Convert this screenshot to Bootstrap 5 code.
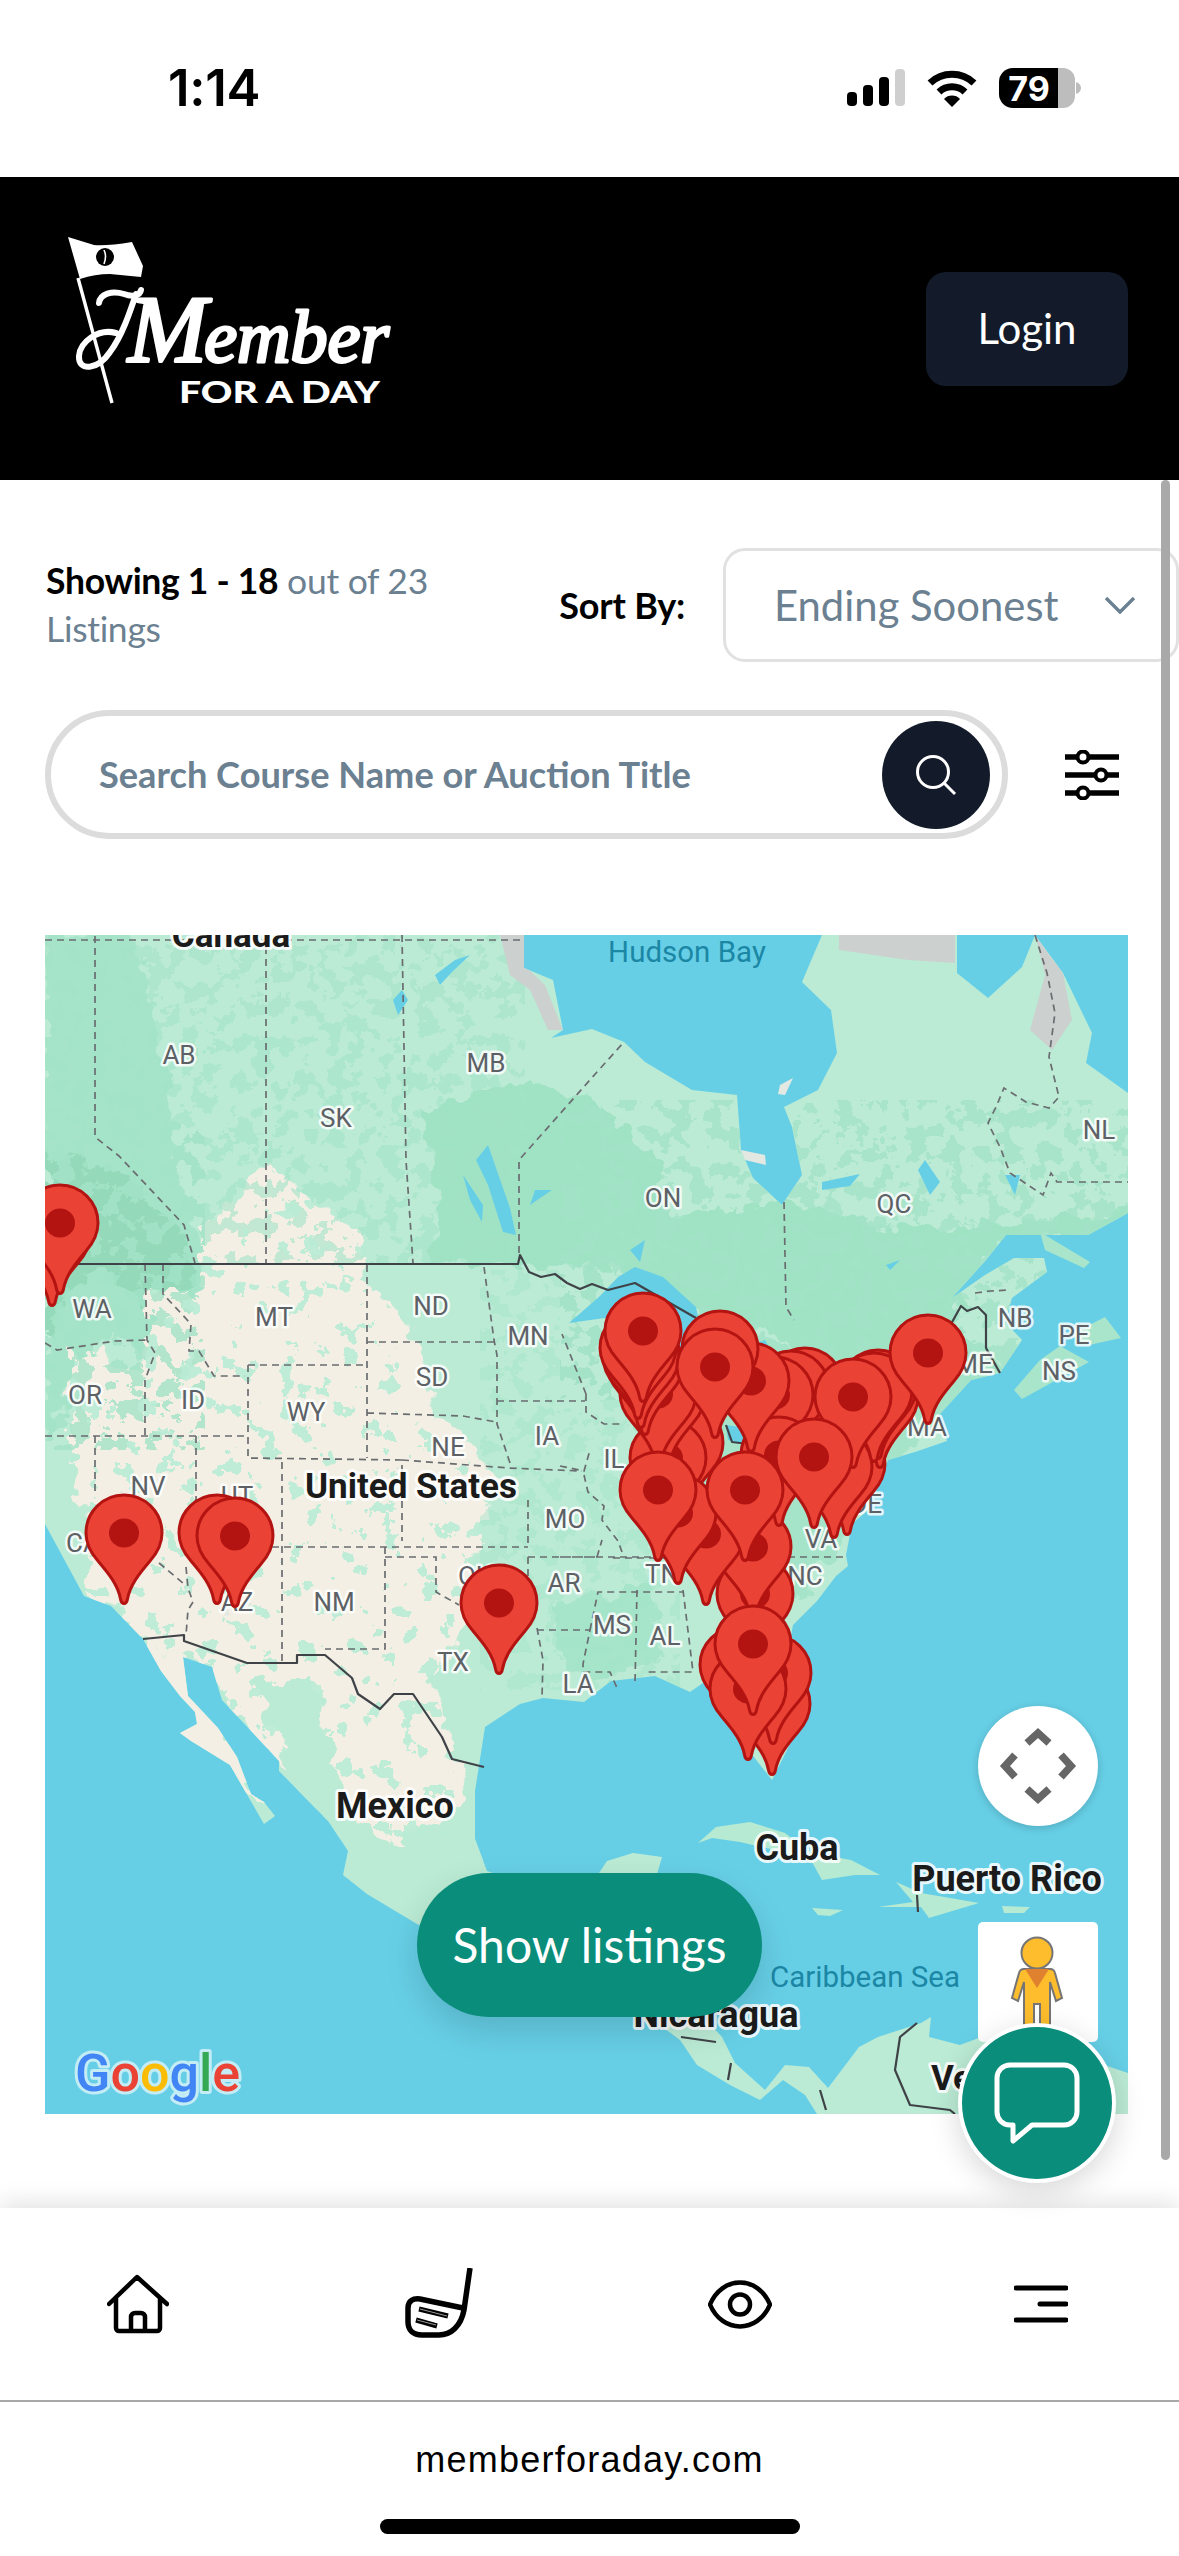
<!DOCTYPE html>
<html lang="en">
<head>
<meta charset="utf-8">
<title>Member For A Day</title>
<link href="https://cdn.jsdelivr.net/npm/bootstrap@5.3.0/dist/css/bootstrap.min.css" rel="stylesheet">
<style>
html,body{margin:0;width:1179px;height:2556px;overflow:hidden;background:#fff}
body{font-family:"Lato","Liberation Sans",sans-serif;color:#000}
.page-shell{width:1179px;height:2556px;position:relative;overflow:hidden}
.status-strip{height:177px;padding:0 98px 0 168px;background:#fff;flex:none}
.clock{font-family:"Inter","Liberation Sans",sans-serif;font-weight:600;font-size:51px;line-height:1;margin-top:-2px;letter-spacing:-.3px}
.status-icons{gap:22px;margin-top:-1px}
.brand-bar{height:303px;background:#000;padding:0 51px 0 68px;flex:none}
.brand-logo{width:330px;height:180px;margin-bottom:13px;display:block}
.login-btn{width:202px;height:114px;border:0;border-radius:20px;background:#131a29;color:#fff;font-size:42px;padding:0}
.login-btn:hover{background:#131a29;color:#fff}
.content-area{flex:1 1 auto;padding:68px 0 0 45px;position:relative;min-height:0}
.tool-row{height:114px}
.count-text{width:515px;font-size:35.5px;line-height:48px;color:#6b8090;padding-left:1px;letter-spacing:-.3px}
.count-text b{color:#000;font-weight:700}
.sort-label{width:164px;font-size:36px;font-weight:700;white-space:nowrap;letter-spacing:-.2px}
.sort-box{flex:0 0 456px;height:114px;border:3px solid #e1e1e1;border-radius:22px;padding:0 40px 0 48px;font-size:41.8px;color:#6b8090;background:#fff}
.search-row{margin-top:48px;height:129px}
.search-pill{width:963px;height:129px;border:6px solid #dcdcdc;border-radius:65px;padding:0 12px 0 48px;background:#fff}
.search-field{border:0;background:transparent;flex:1 1 auto;min-width:0;font-size:36.2px;font-weight:700;color:#6b8090;outline:0;font-family:"Lato",sans-serif;padding:0}
.search-field::placeholder{color:#6b8090;opacity:1}
.search-go{width:108px;height:108px;border-radius:50%;background:#131a29;flex:none;border:0;padding:0}
.filter-ico{margin-left:57px;display:block}
.map-wrap{position:relative;width:1083px;height:1179px;margin-top:96px;overflow:hidden}
.map-art{display:block;width:1083px;height:1179px}
.m-s{font:400 26px "Roboto",sans-serif;fill:#5d6166;stroke:#fff;stroke-width:5px;stroke-opacity:.82;paint-order:stroke;text-anchor:middle;stroke-linejoin:round}
.m-b{font:700 35px "Roboto",sans-serif;fill:#1b1b1b;stroke:#fff;stroke-width:6px;stroke-opacity:.85;paint-order:stroke;text-anchor:middle;stroke-linejoin:round}
.m-b2{font-size:36px}
.m-w{font:400 29.5px "Roboto",sans-serif;fill:#1b87a5;text-anchor:middle}
.m-g{font:500 52px "Roboto",sans-serif;stroke:#c3ecf5;stroke-width:6px;paint-order:stroke;stroke-linejoin:round}
.pan-ctl{position:absolute;left:933px;top:771px;width:120px;height:120px;border-radius:50%;background:#fff;box-shadow:0 2px 8px rgba(0,0,0,.18)}
.peg-ctl{position:absolute;left:933px;top:987px;width:120px;height:120px;border-radius:5px;background:#fff}
.show-btn{position:absolute;left:372px;top:938px;width:345px;height:144px;border-radius:72px;background:#0a8d7a;color:#fff;border:0;font-size:48px;padding:0;box-shadow:0 14px 34px rgba(0,0,0,.14)}
.show-btn:hover{background:#0a8d7a;color:#fff}
.chat-fab{position:absolute;left:958px;top:2023px;width:158px;height:160px;border-radius:50%;background:#0a8d7a;border:4px solid #fff;box-shadow:0 8px 30px rgba(0,0,0,.16);z-index:5;padding:0}
.bar-thumb{position:absolute;left:1161px;top:480px;width:9px;height:1680px;border-radius:5px;background:#a9a9a9;z-index:4}
.tab-bar{height:192px;background:#fff;padding:0 111px 0 107px;position:relative;z-index:3;box-shadow:0 -6px 22px rgba(0,0,0,.11);flex:none}
.eye-ico{margin-right:6px}
.addr-bar{height:156px;border-top:2px solid #a8a8a8;background:#fff;flex:none;position:relative;z-index:3}
.addr-text{font-family:"Liberation Sans",sans-serif;font-size:36px;line-height:1;text-align:center;padding-top:40px;letter-spacing:1.25px}
.home-pill{width:420px;height:15px;border-radius:8px;background:#000;margin:41px auto 0}
</style>
</head>
<body>
<div class="page-shell d-flex flex-column">

  <div class="status-strip d-flex justify-content-between align-items-center">
    <div class="clock">1:14</div>
    <div class="status-icons d-flex align-items-center">
      <svg width="58" height="38" viewBox="0 0 58 38"><rect x="0" y="23" width="10" height="14" rx="4"/><rect x="16" y="16" width="10" height="21" rx="4"/><rect x="32" y="8" width="10" height="29" rx="4"/><rect x="48" y="0" width="10" height="37" rx="4" fill="#cfcfcf"/></svg>
      <svg width="50" height="38" viewBox="0 0 50 38"><path d="M3 14A32 32 0 0 1 47 14M12 23A19 19 0 0 1 38 23" fill="none" stroke="#000" stroke-width="7"/><path d="M17 30A11 11 0 0 1 33 30L25 38Z"/></svg>
      <svg width="82" height="40" viewBox="0 0 82 40"><path d="M59 0H14A14 14 0 0 0 0 14V26A14 14 0 0 0 14 40H59Z"/><path d="M59 0H64A12 12 0 0 1 76 12V28A12 12 0 0 1 64 40H59Z" fill="#bdbdbd"/><path d="M77 14C80 15 82 17 82 20S80 25 77 26Z" fill="#bdbdbd"/><text x="30" y="33" text-anchor="middle" fill="#fff" font-family="Inter,sans-serif" font-weight="700" font-size="34">79</text></svg>
    </div>
  </div>

  <header class="brand-bar d-flex align-items-center justify-content-between">
    <svg class="brand-logo" viewBox="68 232 330 180" role="img" aria-label="Member For A Day">
      <path d="M68 237L94 245Q108 246 132 242L143 266L141 277L110 274Q95 274 80 279Z" fill="#fff"/>
      <circle cx="105" cy="257" r="9" fill="#000"/>
      <path d="M104 250Q107 256 104 264" stroke="#fff" stroke-width="1.6" fill="none"/>
      <path d="M78 278L112 403" stroke="#fff" stroke-width="3.4"/>
      <path d="M99 303C100 294 112 290 124 294C132 297 140 296 141 290" fill="none" stroke="#fff" stroke-width="6" stroke-linecap="round" stroke-linejoin="round"/>
      <path d="M116 333C98 328 80 342 79 356C78 372 98 370 110 352C122 336 130 312 136 294" fill="none" stroke="#fff" stroke-width="6" stroke-linecap="round"/>
      <text x="128" y="362" font-family="'Liberation Serif',serif" font-style="italic" fill="#fff" stroke="#fff" stroke-width="3" stroke-linejoin="round"><tspan font-size="95">M</tspan><tspan font-size="74" dx="-3">ember</tspan></text>
      <text x="179" y="403" textLength="201" lengthAdjust="spacingAndGlyphs" font-family="Lato,sans-serif" font-weight="900" font-size="30" fill="#fff">FOR A DAY</text>
    </svg>
    <button class="btn login-btn" type="button">Login</button>
  </header>

  <main class="content-area">
    <div class="tool-row d-flex align-items-center">
      <div class="count-text"><b>Showing 1 - 18</b> out of 23<br>Listings</div>
      <div class="sort-label">Sort By:</div>
      <div class="sort-box d-flex align-items-center justify-content-between">
        <span>Ending Soonest</span>
        <svg width="32" height="18" viewBox="0 0 32 18"><path d="M2 2L16 16L30 2" fill="none" stroke="#6b8090" stroke-width="3.4"/></svg>
      </div>
    </div>

    <div class="search-row d-flex align-items-center">
      <div class="search-pill d-flex align-items-center">
        <input class="search-field" type="text" placeholder="Search Course Name or Auction Title" aria-label="Search">
        <button class="search-go d-flex align-items-center justify-content-center" type="button" aria-label="Search">
          <svg width="42" height="42" viewBox="0 0 42 42"><circle cx="18" cy="18" r="15.5" fill="none" stroke="#fff" stroke-width="3"/><path d="M29 29L40 40" stroke="#fff" stroke-width="3"/></svg>
        </button>
      </div>
      <svg class="filter-ico" width="54" height="50" viewBox="0 0 54 50">
        <path d="M0 7H54M0 25H54M0 43H54" stroke="#000" stroke-width="5.5"/>
        <circle cx="18" cy="7" r="5.5" fill="#fff" stroke="#000" stroke-width="4"/>
        <circle cx="36" cy="25" r="5.5" fill="#fff" stroke="#000" stroke-width="4"/>
        <circle cx="18" cy="43" r="5.5" fill="#fff" stroke="#000" stroke-width="4"/>
      </svg>
    </div>

    <div class="map-wrap">
      <svg class="map-art" viewBox="45 935 1083 1179" xmlns="http://www.w3.org/2000/svg">
        <defs>
          <path id="landShape" d="M45 935H524V968L553 980L563 1030L551 1038L592 1029L624 1042L645 1062L692 1090L737 1095L741 1150L753 1178L782 1205L802 1175L792 1127L784 1107L818 1090L837 1053L831 1010L802 982L822 935H957V973L988 998L1022 967L1035 935L1063 973L1092 1033L1086 1063L1128 1093V1213L1088 1235H1006L986 1260L941 1310L952 1298L985 1275L1014 1258L1044 1258L1047 1272L1012 1298L1005 1322L1022 1340L1000 1373L971 1380L939 1415L947 1441L915 1452L888 1460L880 1481L868 1510L852 1524L846 1555L848 1566L836 1576L817 1601L793 1625L789 1646L809 1706L772 1780L750 1752L734 1730V1688L716 1674L690 1692L655 1676L611 1681L584 1702L543 1698L520 1704L485 1727L480 1759L475 1791V1839L487 1871L540 1890L599 1873L607 1861L633 1853L662 1857L654 1885L650 1960L700 2013L722 2037L735 2063L765 2090L785 2065L809 2067L828 2088L859 2047L878 2037L921 2023L931 2017L929 2037L960 2045L1000 2030L1030 2040L1128 2073V2114H817L805 2095L783 2080L760 2100L730 2085L697 2065L680 2040L640 2010L560 1990L417 1924L367 1894L343 1875L348 1851L329 1822L279 1771V1761L253 1733L222 1700L212 1667L183 1657L188 1696L218 1728L237 1757L251 1794L264 1802L275 1816L264 1824L230 1765L191 1741L180 1733L197 1724L195 1712L180 1696L161 1671L143 1639L111 1606L84 1596L45 1524Z"/>
          <clipPath id="landClip"><use href="#landShape"/></clipPath>
          <clipPath id="beigeClip"><path d="M203 1228L268 1167L310 1200L367 1236L365 1280L420 1340L430 1400L500 1480L470 1560L470 1620L430 1680L470 1790L440 1850L400 1850L340 1810L279 1761L253 1733L222 1700L212 1667L184 1657L143 1639L111 1606L84 1590L90 1510L70 1470L70 1350L145 1370L150 1290L200 1290Z"/></clipPath>
          <filter id="roughEdge" x="-5%" y="-5%" width="110%" height="110%" color-interpolation-filters="sRGB"><feTurbulence type="fractalNoise" baseFrequency=".045" numOctaves="3" seed="7" result="n"/><feDisplacementMap in="SourceGraphic" in2="n" scale="30" xChannelSelector="R" yChannelSelector="G"/></filter>
          <filter id="softEdge" x="-2%" y="-2%" width="104%" height="104%"><feGaussianBlur stdDeviation=".7"/></filter>
          <filter id="mottleDark" x="0" y="0" width="100%" height="100%" color-interpolation-filters="sRGB"><feTurbulence type="fractalNoise" baseFrequency=".055" numOctaves="4" seed="11"/><feColorMatrix values="0 0 0 0 .64  0 0 0 0 .89  0 0 0 0 .78  2 0 0 0 -.5"/><feComponentTransfer><feFuncA type="discrete" tableValues="0 0 0 1 1"/></feComponentTransfer></filter>
          <filter id="mottleLight" x="0" y="0" width="100%" height="100%" color-interpolation-filters="sRGB"><feTurbulence type="fractalNoise" baseFrequency=".05" numOctaves="4" seed="23"/><feColorMatrix values="0 0 0 0 .73  0 0 0 0 .92  0 0 0 0 .835  2 0 0 0 -.7"/><feComponentTransfer><feFuncA type="discrete" tableValues="0 0 0 1 1"/></feComponentTransfer></filter>
          <g id="pin"><path d="M-3.5 -6C-6 -20 -15 -31 -26 -44C-34 -53 -38 -62 -38 -72A38 38 0 1 1 38 -72C38 -62 34 -53 26 -44C15 -31 6 -20 3.5 -6C2.5 0 -2.5 0 -3.5 -6Z" fill="#ea4335" stroke="#b31412" stroke-width="3" stroke-linejoin="round"/><ellipse cx="0" cy="-72" rx="15" ry="14.5" fill="#b31412"/></g>
        </defs>

        <rect x="45" y="935" width="1083" height="1179" fill="#66cfe6"/>
        <g filter="url(#softEdge)">
          <use href="#landShape" fill="#bbebd5"/>
          <path d="M1105 1317L1121 1338L1089 1345L1070 1335Z M1014 1390L1022 1399L1089 1362L1060 1346L1040 1360Z M1040 1232L1090 1262L1084 1268L1045 1250Z" fill="#a9e5ca"/>
          <path d="M698 1843L716 1827L750 1822L785 1833L812 1853L851 1860L880 1875L855 1875L822 1880L812 1862L775 1850L740 1842L712 1838Z M896 1882L921 1893L979 1903L929 1918L921 1907L878 1907L913 1902Z M812 1908L843 1910L830 1916L818 1915Z M1002 1906L1030 1907L1024 1913L1004 1913Z" fill="#b6ead2"/>
          <g clip-path="url(#landClip)">
            <g filter="url(#roughEdge)">
              <path d="M45 935H130L150 1000L170 1100L180 1180L210 1270L190 1330L170 1380L140 1350L115 1330L70 1390L60 1430L45 1440Z" fill="#a5e4c8"/>
              <path d="M420 1110L520 1080L594 1103L655 1157L675 1217L765 1200L908 1230L1006 1223L1128 1213V1240L1000 1240L950 1320L860 1370L780 1340L700 1310L630 1270L520 1264L430 1262L440 1200Z" fill="#a0e2c4"/>
              <path d="M45 1150L120 1170L180 1230L195 1280L150 1310L100 1265L60 1300L45 1340Z" fill="#93d9ba"/>
              <path d="M860 1370L950 1320L1000 1373L930 1430L880 1480L840 1540L800 1600L740 1560L700 1480L640 1430L610 1360L700 1320Z" fill="#a5e4c8"/>
              <path d="M560 1600L650 1590L660 1660L590 1680L555 1650Z" fill="#a7e5ca"/>
              <path d="M203 1228L268 1167L310 1200L367 1236L365 1280L420 1340L430 1400L500 1480L470 1560L470 1620L430 1680L470 1790L440 1850L400 1850L340 1810L279 1761L253 1733L222 1700L212 1667L184 1657L143 1639L111 1606L84 1590L90 1510L70 1470L70 1350L145 1370L150 1290L200 1290Z M143 1639L183 1657L240 1760L285 1835L250 1790L180 1745L150 1680Z" fill="#f3efe4"/>
              <path d="M252 1680L310 1680L350 1800L340 1850L290 1775Z M400 1840L480 1800L480 1880L420 1880Z" fill="#bbebd5"/>
            </g>
            <rect x="45" y="935" width="480" height="330" filter="url(#mottleDark)" opacity=".6"/>
            <rect x="45" y="1130" width="160" height="320" filter="url(#mottleDark)" opacity=".8"/>
            <rect x="560" y="1100" width="568" height="300" filter="url(#mottleDark)" opacity=".8"/>
            <rect x="480" y="1270" width="200" height="420" filter="url(#mottleDark)" opacity=".45"/>
            <g clip-path="url(#beigeClip)"><rect x="45" y="1160" width="480" height="700" filter="url(#mottleLight)" opacity=".9"/></g>
            <path d="M500 935H524V965L545 985L563 1030L548 1030L530 990L510 975Z M839 935H955V963L908 960L839 950Z M1035 935L1063 973L1072 1020L1052 1050L1030 1030L1045 975Z" fill="#ccd1cf"/>
          </g>
          <path d="M569 1323L600 1296L618 1277L635 1267L663 1277L696 1307L704 1345L670 1350L640 1330L605 1318Z M710 1360L765 1340L782 1370L730 1400L700 1395Z M726 1425L746 1428L745 1444L728 1440Z" fill="#66cfe6"/>
          <path d="M488 1145L510 1208L516 1235L503 1232L488 1185L476 1160Z M463 1175L483 1205L482 1222L470 1200Z M435 975L455 960L470 955L452 972L440 985Z M393 1000L402 990L408 1000L398 1015Z M925 1160L940 1182L930 1195L918 1170Z M822 1182L860 1174L850 1186L822 1190Z M645 1240L640 1262L630 1250Z M535 1190L552 1190L530 1205Z M886 1265L900 1260L890 1270Z M1005 1175L1015 1195L1020 1175Z" fill="#66cfe6"/>
          <path d="M219 1590L230 1615L225 1616Z M741 1150L765 1155L766 1165L745 1160Z M780 1085L793 1078L785 1095L778 1094Z" fill="#e4e8e2"/>
        </g>

        <g fill="none" stroke="#6a6d70" stroke-width="1.7" stroke-dasharray="7 5" filter="url(#softEdge)">
          <path d="M45 940H524M95 936V1137L119 1156L184 1225L195 1263M266 935V1264M402 935L406 1160L413 1263M519 1253V1160L597 1072L624 1042"/>
          <path d="M145 1264L147 1340L155 1353L145 1380V1435M163 1264V1294L191 1324L189 1351H199L214 1376H245M45 1343L57 1350L115 1341L147 1340M45 1436H248M95 1436V1496M159 1563L184 1584M196 1436V1500M186 1567L188 1588L193 1602L188 1610L186 1635M248 1365V1458L402 1460V1541M248 1365H367M367 1265V1458M367 1342H494M367 1413L463 1416L496 1422M484 1267L494 1340L497 1355V1424L511 1466M497 1401H585M402 1460L509 1468L582 1471"/>
          <path d="M282 1462V1663M272 1547H528M385 1547V1649H325M385 1557H436V1592L459 1605M528 1500V1547M528 1557H597M528 1557V1580M537 1628L543 1660L542 1698M537 1630H590L583 1664V1672H610L617 1688M590 1630L598 1592H683M637 1590L635 1684M683 1590L693 1672H647M613 1558H670M560 1557H846"/>
          <path d="M586 1394L562 1334M586 1394V1412L604 1424H624M560 1466L584 1471L590 1450M584 1475L588 1492L604 1506L602 1520L618 1541L622 1552M597 1557L602 1540"/>
          <path d="M784 1202L786 1307L794 1320M1035 935L1047 973L1055 1013L1049 1057L1059 1097L1049 1108L1026 1102L1004 1088L996 1107L988 1123L1000 1147L1010 1173L1043 1195L1051 1173L1057 1182H1128M975 1293L990 1291L1010 1290"/>
        </g>
        <g fill="none" stroke="#3f4347" stroke-width="2.2" stroke-linejoin="round">
          <path d="M45 1264H518L520 1255L529 1272L541 1277L555 1274L567 1283L580 1289L592 1284L608 1290L635 1283L696 1318"/>
          <path d="M951 1324L961 1306L967 1311L978 1307L986 1315V1348L1000 1373"/>
          <path d="M143 1639L184 1635V1641L247 1663H297V1655H325L352 1678L358 1694L380 1709L394 1694H413L442 1737L452 1759L484 1767"/>
          <path d="M726 1425L732 1442L748 1444M681 2037L716 2042M731 2063L728 2080M917 2023L900 2037L895 2070L910 2105L950 2110L955 2114M917 1895L918 1912M820 2090L826 2110"/>
        </g>

        <text class="m-b" x="231" y="947">Canada</text>
        <text class="m-w" x="687" y="962">Hudson Bay</text>
        <g>
          <text class="m-s" x="179" y="1064">AB</text><text class="m-s" x="486" y="1072">MB</text><text class="m-s" x="336" y="1127">SK</text>
          <text class="m-s" x="663" y="1207">ON</text><text class="m-s" x="894" y="1213">QC</text><text class="m-s" x="1099" y="1139">NL</text>
          <text class="m-s" x="1015" y="1327">NB</text><text class="m-s" x="1074" y="1344">PE</text><text class="m-s" x="1059" y="1380">NS</text>
          <text class="m-s" x="92" y="1318">WA</text><text class="m-s" x="274" y="1326">MT</text><text class="m-s" x="431" y="1315">ND</text><text class="m-s" x="528" y="1345">MN</text>
          <text class="m-s" x="432" y="1386">SD</text><text class="m-s" x="85" y="1404">OR</text><text class="m-s" x="193" y="1409">ID</text><text class="m-s" x="306" y="1421">WY</text>
          <text class="m-s" x="448" y="1456">NE</text><text class="m-s" x="547" y="1445">IA</text><text class="m-s" x="148" y="1495">NV</text><text class="m-s" x="237" y="1505">UT</text>
          <text class="m-s" x="83" y="1552">CA</text><text class="m-s" x="237" y="1611">AZ</text><text class="m-s" x="334" y="1611">NM</text><text class="m-s" x="475" y="1585">OK</text>
          <text class="m-s" x="453" y="1671">TX</text><text class="m-s" x="565" y="1528">MO</text><text class="m-s" x="564" y="1592">AR</text><text class="m-s" x="612" y="1634">MS</text>
          <text class="m-s" x="665" y="1645">AL</text><text class="m-s" x="578" y="1693">LA</text><text class="m-s" x="662" y="1583">TN</text><text class="m-s" x="614" y="1468">IL</text>
          <text class="m-s" x="821" y="1548">VA</text><text class="m-s" x="805" y="1585">NC</text><text class="m-s" x="866" y="1513">DE</text><text class="m-s" x="927" y="1436">MA</text><text class="m-s" x="974" y="1373">ME</text>
        </g>
        <text class="m-b" x="411" y="1498">United States</text>
        <text class="m-b m-b2" x="395" y="1818">Mexico</text>
        <text class="m-b m-b2" x="797" y="1860">Cuba</text>
        <text class="m-b m-b2" x="1007" y="1891">Puerto Rico</text>
        <text class="m-w" x="865" y="1987">Caribbean Sea</text>
        <text class="m-b m-b2" x="716" y="2027">Nicaragua</text>
        <text class="m-b" x="931" y="2090" style="text-anchor:start">Venezuela</text>

        <g>
          <use href="#pin" x="52" y="1307"/><use href="#pin" x="60" y="1295"/>
          <use href="#pin" x="124" y="1605"/><use href="#pin" x="217" y="1605"/><use href="#pin" x="235" y="1608"/>
          <use href="#pin" x="499" y="1675"/>
          <use href="#pin" x="772" y="1776"/><use href="#pin" x="773" y="1745"/><use href="#pin" x="738" y="1737"/><use href="#pin" x="748" y="1761"/>
          <use href="#pin" x="755" y="1666"/><use href="#pin" x="753" y="1619"/>
          <use href="#pin" x="847" y="1536"/><use href="#pin" x="834" y="1539"/>
          <use href="#pin" x="880" y="1469"/><use href="#pin" x="878" y="1460"/><use href="#pin" x="874" y="1463"/>
          <use href="#pin" x="805" y="1458"/><use href="#pin" x="791" y="1461"/><use href="#pin" x="775" y="1467"/><use href="#pin" x="779" y="1527"/>
          <use href="#pin" x="751" y="1453"/><use href="#pin" x="720" y="1421"/>
          <use href="#pin" x="685" y="1515"/><use href="#pin" x="668" y="1530"/><use href="#pin" x="706" y="1606"/><use href="#pin" x="678" y="1585"/>
          <use href="#pin" x="667" y="1467"/><use href="#pin" x="658" y="1466"/><use href="#pin" x="645" y="1436"/><use href="#pin" x="641" y="1429"/><use href="#pin" x="638" y="1420"/>
          <use href="#pin" x="643" y="1403"/><use href="#pin" x="715" y="1439"/><use href="#pin" x="853" y="1469"/><use href="#pin" x="814" y="1529"/>
          <use href="#pin" x="658" y="1562"/><use href="#pin" x="745" y="1562"/><use href="#pin" x="928" y="1425"/><use href="#pin" x="753" y="1716"/>
        </g>

        <text class="m-g" x="75" y="2091"><tspan fill="#4285f4">G</tspan><tspan fill="#ea4335">o</tspan><tspan fill="#fbbc05">o</tspan><tspan fill="#4285f4">g</tspan><tspan fill="#34a853">l</tspan><tspan fill="#ea4335">e</tspan></text>
      </svg>

      <div class="pan-ctl">
        <svg width="120" height="120" viewBox="0 0 120 120"><path d="M49 37L60 27L71 37M37 49L27 60L37 71M83 49L93 60L83 71M49 83L60 93L71 83" fill="none" stroke="#666" stroke-width="7.5"/></svg>
      </div>
      <div class="peg-ctl">
        <svg width="120" height="120" viewBox="0 0 120 120">
          <circle cx="59" cy="31" r="15.5" fill="#fdbd2c" stroke="#757575" stroke-width="2"/>
          <path d="M46 47H72Q76 47 77 51L84 76L78 79L72 60V112H62V82H56V112H46V60L40 79L34 76L41 51Q42 47 46 47Z" fill="#fdbd2c" stroke="#757575" stroke-width="2"/>
          <path d="M47 47H71L59 66Z" fill="#e0812f"/>
        </svg>
      </div>
      <button class="btn show-btn" type="button">Show listings</button>
    </div>
  </main>

  <div class="bar-thumb"></div>

  <button class="chat-fab d-flex align-items-center justify-content-center" type="button" aria-label="Chat">
    <svg width="86" height="82" viewBox="0 0 86 82"><path d="M16 3H70A13 13 0 0 1 83 16V50A13 13 0 0 1 70 63H38L19 79V63H16A13 13 0 0 1 3 50V16A13 13 0 0 1 16 3Z" fill="none" stroke="#fff" stroke-width="5" stroke-linejoin="round"/></svg>
  </button>

  <nav class="tab-bar d-flex justify-content-between align-items-center">
    <svg width="62" height="60" viewBox="0 0 62 60"><path d="M2 30L30 3L60 30M9 24V54A3 3 0 0 0 12 57H50A3 3 0 0 0 53 54V24M24 57V43A4 4 0 0 1 28 39H34A4 4 0 0 1 38 43V57" fill="none" stroke="#000" stroke-width="4.5" stroke-linecap="round" stroke-linejoin="round"/></svg>
    <svg width="68" height="72" viewBox="0 0 68 72"><path d="M65 0L59 42C56 58 46 67 34 67H17C8 67 3 62 3 54V40C3 33 8 30 15 31L58 40" fill="none" stroke="#000" stroke-width="5.5"/><path d="M14 41L43 48M11 52L32 58" stroke="#000" stroke-width="5"/><path d="M15 41L42 48M12 52L31 57" stroke="#999" stroke-width="1"/></svg>
    <svg class="eye-ico" width="64" height="49" viewBox="0 0 64 49"><path d="M2 24.5C8 10 20 2.5 32 2.5S56 10 62 24.5C56 39 44 46.5 32 46.5S8 39 2 24.5Z" fill="none" stroke="#000" stroke-width="4.5"/><circle cx="32" cy="24.5" r="10" fill="none" stroke="#000" stroke-width="4.5"/></svg>
    <svg width="54" height="38" viewBox="0 0 54 38"><path d="M2 3H52M26 19H52M2 35H52" stroke="#000" stroke-width="5" stroke-linecap="round"/></svg>
  </nav>

  <div class="addr-bar">
    <div class="addr-text">memberforaday.com</div>
    <div class="home-pill"></div>
  </div>
</div>
<script src="https://cdn.jsdelivr.net/npm/bootstrap@5.3.0/dist/js/bootstrap.bundle.min.js"></script>
</body>
</html>
